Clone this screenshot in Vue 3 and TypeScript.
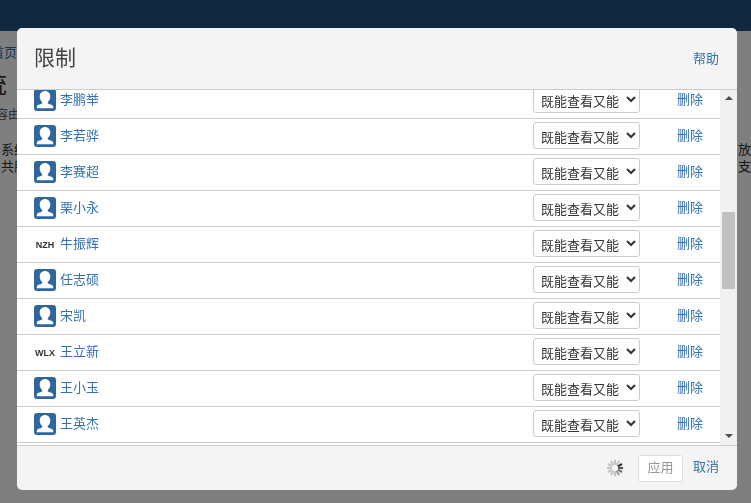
<script setup lang="ts">
interface Member {
  name: string
  initials?: string
}

const members: Member[] = [
  { name: '李鹏举' },
  { name: '李若骅' },
  { name: '李赛超' },
  { name: '栗小永' },
  { name: '牛振辉', initials: 'NZH' },
  { name: '任志硕' },
  { name: '宋凯' },
  { name: '王立新', initials: 'WLX' },
  { name: '王小玉' },
  { name: '王英杰' },
  { name: '吴海涛' },
]

const spokes = Array.from({ length: 12 }, (_, i) => ({
  angle: i * 30,
  color: i >= 2 && i <= 5 ? ['#333', '#555', '#777', '#999'][i - 2] : '#c4c4c4',
}))
</script>

<template>
  <div class="page">
    <div class="topbar"></div>
    <div class="content">
      <a class="crumb">首页</a>
      <h1 class="heading">统</h1>
      <p class="sub">内容由</p>
      <div class="para">
        <span>系统</span>
        <span>放</span>
      </div>
      <div class="para">
        <span>共服</span>
        <span>支</span>
      </div>
    </div>
  </div>

  <div class="overlay"></div>

  <div class="dialog">
    <header class="dialog-header">
      <h2 class="dialog-title">限制</h2>
      <a class="link">帮助</a>
    </header>

    <div class="dialog-body">
      <div class="list">
        <div v-for="m in members" :key="m.name" class="row">
          <div class="who">
            <span v-if="m.initials" class="initials">{{ m.initials }}</span>
            <svg v-else class="avatar" viewBox="0 0 22 22">
              <rect width="22" height="22" rx="3" fill="#2e669f" />
              <path
                d="M11 2c-3 0-5.300 2.300-5.300 5.400 0 2.400 1.100 4.300 2.500 5.500v.8c0 .6-.5 1-1.200 1.200-2 .5-3.600 1-4 2.100-.2.6-.3 1.400-.3 2.300h16.600c0-.9-.1-1.700-.3-2.300-.4-1.100-2-1.600-4-2.100-.7-.2-1.200-.6-1.200-1.200v-.8c1.400-1.200 2.500-3.100 2.500-5.500 0-3.100-2.300-5.400-5.300-5.400z"
                fill="#fff"
              />
            </svg>
            <a class="link name">{{ m.name }}</a>
          </div>
          <select class="perm">
            <option>既能查看又能</option>
            <option>只能查看</option>
          </select>
          <a class="link remove">删除</a>
        </div>
      </div>
      <div class="scrollbar">
        <span class="arrow up"></span>
        <span class="thumb"></span>
        <span class="arrow down"></span>
      </div>
    </div>

    <footer class="dialog-footer">
      <svg class="spinner" viewBox="0 0 20 20">
        <rect
          v-for="s in spokes"
          :key="s.angle"
          x="8.800"
          y="1"
          width="2.400"
          height="5.500"
          :fill="s.color"
          :transform="`rotate(${s.angle} 10 10)`"
        />
      </svg>
      <button class="apply" disabled>应用</button>
      <a class="link cancel">取消</a>
    </footer>
  </div>
</template>

<style scoped>
.page {
  font-family: "Noto Sans CJK SC", "Liberation Sans", sans-serif;
  font-size: 13px;
  color: #333;
  background: #fff;
  height: 503px;
  overflow: hidden;
}

.topbar {
  height: 31px;
  background: #205081;
}

.content {
  padding-top: 11px;
}

.crumb {
  display: block;
  margin-left: -9px;
  line-height: 20px;
  color: #3572b0;
}

.heading {
  margin: 6px 0 0 -17px;
  font-size: 24px;
  font-weight: 400;
  line-height: 30px;
}

.sub {
  margin: 8px 0 0 -16px;
  font-size: 12px;
  line-height: 16px;
  color: #555;
}

.para {
  display: flex;
  justify-content: space-between;
  line-height: 17px;
  margin-left: 1px;
}

.para:first-of-type {
  margin-top: 18px;
}

.overlay {
  position: fixed;
  inset: 0;
  background: rgba(0, 0, 0, 0.5);
}

.dialog {
  position: fixed;
  left: 17px;
  top: 28px;
  width: 720px;
  height: 462px;
  display: flex;
  flex-direction: column;
  background: #f4f4f4;
  border-radius: 5px;
  overflow: hidden;
  font-family: "Noto Sans CJK SC", "Liberation Sans", sans-serif;
  font-size: 13px;
  color: #333;
}

.dialog-header {
  height: 61px;
  flex: none;
  display: flex;
  align-items: center;
  justify-content: space-between;
  padding: 0 18px;
  border-bottom: 1px solid #ccc;
  box-sizing: content-box;
}

.dialog-title {
  margin: -6px 0 0 0;
  font-size: 21px;
  font-weight: 400;
  color: #444;
  transform: translateX(-1px);
}

.link {
  color: #3572b0;
  cursor: pointer;
}

.dialog-header .link {
  margin-top: -2px;
}

.dialog-body {
  flex: 1;
  min-height: 0;
  display: flex;
  background: #fff;
}

.list {
  flex: 1;
  min-width: 0;
  overflow: hidden;
}

.row {
  height: 36px;
  box-sizing: border-box;
  display: flex;
  align-items: center;
  border-bottom: 1px solid #ccc;
  padding-left: 17px;
}

.row:first-child {
  margin-top: -7px;
}

.who {
  flex: 1;
  display: flex;
  align-items: center;
  gap: 4px;
}

.avatar {
  width: 22px;
  height: 22px;
  flex: none;
  margin-top: -2px;
}

.name {
  margin-top: -4px;
}

.initials {
  width: 22px;
  flex: none;
  text-align: center;
  font-family: "Liberation Sans", sans-serif;
  font-size: 9px;
  font-weight: 700;
  color: #333;
}

.perm {
  width: 107px;
  height: 27px;
  flex: none;
  margin-top: -2px;
  box-sizing: border-box;
  padding: 2px 0 0 3px;
  border: 1px solid #ccc;
  border-radius: 3px;
  background-color: #fff;
  font-family: inherit;
  font-size: 13px;
  color: #333;
}

.remove {
  width: 80px;
  flex: none;
  box-sizing: border-box;
  padding-left: 20px;
  text-align: center;
  margin-top: -5px;
}

.scrollbar {
  width: 17px;
  flex: none;
  position: relative;
  background: #f1f1f1;
}

.thumb {
  position: absolute;
  left: 2px;
  top: 122px;
  width: 13px;
  height: 77px;
  background: #c1c1c1;
}

.arrow {
  position: absolute;
  left: 5px;
  width: 0;
  height: 0;
  border-left: 4px solid transparent;
  border-right: 4px solid transparent;
}

.arrow.up {
  top: 6px;
  border-bottom: 4px solid #505050;
}

.arrow.down {
  bottom: 7px;
  border-top: 4px solid #505050;
}

.dialog-footer {
  height: 44px;
  flex: none;
  display: flex;
  align-items: center;
  justify-content: flex-end;
  padding: 0 18px;
  border-top: 1px solid #ccc;
}

.spinner {
  width: 18px;
  height: 18px;
  margin-right: 14px;
}

.apply {
  width: 45px;
  height: 27px;
  margin-right: 10px;
  padding: 0 0 4px;
  border: 1px solid #ddd;
  border-radius: 3px;
  background: #fff;
  color: #999;
  font-family: inherit;
  font-size: 13px;
}

.cancel {
  margin-top: -5px;
}
</style>
